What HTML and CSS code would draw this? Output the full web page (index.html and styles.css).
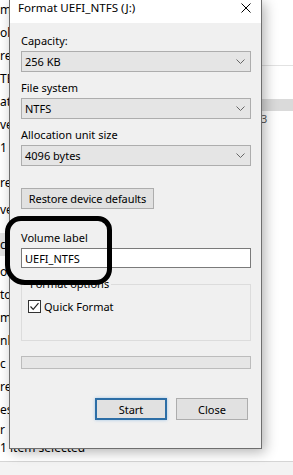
FILE: index.html
```html
<!DOCTYPE html>
<html lang="en">
<head>
  <meta charset="UTF-8">
  <meta name="viewport" content="width=device-width, initial-scale=1.0">
  <title>Format UEFI_NTFS (J:)</title>
  <link rel="stylesheet" href="styles.css">
</head>
<body>
  <!-- Explorer window behind the dialog -->
  <div class="explorer">
    <div class="nav">
      <div class="nav-row">m</div>
      <div class="nav-row">oli</div>
      <div class="nav-row">re</div>
      <div class="nav-row">TEA</div>
      <div class="nav-row">at</div>
      <div class="nav-row">ve</div>
      <div class="nav-row">1</div>
      <div class="nav-row gap">re</div>
      <div class="nav-row gap-s">ve</div>
      <div class="nav-row gap selected">c</div>
      <div class="nav-row gap-s">o</div>
      <div class="nav-row">to</div>
      <div class="nav-row">m</div>
      <div class="nav-row">nlo</div>
      <div class="nav-row">c</div>
      <div class="nav-row">re</div>
      <div class="nav-row">es</div>
      <div class="nav-row last">r</div>
    </div>
    <div class="pane">
      <div class="pane-line"></div>
      <div class="pane-header"></div>
      <div class="pane-count">3</div>
    </div>
  </div>
  <div class="status">1 item selected</div>
  <div class="footer"></div>

  <!-- Format dialog -->
  <div class="dialog">
    <div class="titlebar">
      <span class="title">Format UEFI_NTFS (J:)</span>
      <svg class="close" viewBox="0 0 10 10" width="10" height="10">
        <path d="M0.5 0.5 L9.5 9.5 M9.5 0.5 L0.5 9.5" stroke="#000" stroke-width="1" fill="none"/>
      </svg>
    </div>

    <div class="body">
      <div class="label">Capacity:</div>
      <div class="combo">
        <span class="combo-value">256 KB</span>
        <svg class="combo-arrow" viewBox="0 0 9 5" width="9" height="5"><path d="M0.5 0.5 L4.5 4.5 L8.5 0.5" stroke="#666" fill="none"/></svg>
      </div>

      <div class="label">File system</div>
      <div class="combo">
        <span class="combo-value">NTFS</span>
        <svg class="combo-arrow" viewBox="0 0 9 5" width="9" height="5"><path d="M0.5 0.5 L4.5 4.5 L8.5 0.5" stroke="#666" fill="none"/></svg>
      </div>

      <div class="label">Allocation unit size</div>
      <div class="combo">
        <span class="combo-value">4096 bytes</span>
        <svg class="combo-arrow" viewBox="0 0 9 5" width="9" height="5"><path d="M0.5 0.5 L4.5 4.5 L8.5 0.5" stroke="#666" fill="none"/></svg>
      </div>

      <button class="btn btn-restore" type="button">Restore device defaults</button>

      <div class="label label-volume">Volume label</div>
      <input class="text-input" type="text" value="UEFI_NTFS">

      <fieldset class="group">
        <legend>Format options</legend>
        <div class="check-row">
          <span class="checkbox">
            <svg viewBox="0 0 11 11" width="11" height="11"><path d="M1.5 5.5 L4.2 8.3 L9.5 2.2" stroke="#222" stroke-width="1.2" fill="none"/></svg>
          </span>
          <span>Quick Format</span>
        </div>
      </fieldset>

      <div class="progress"></div>

      <div class="actions">
        <button class="btn btn-default" type="button">Start</button>
        <button class="btn" type="button">Close</button>
      </div>
    </div>
  </div>

  <!-- hand drawn marker around the volume label -->
  <div class="marker"></div>
</body>
</html>
```

FILE: styles.css
```css
* {
  box-sizing: border-box;
}
html, body {
  margin: 0;
  padding: 0;
}
body {
  width: 293px;
  height: 475px;
  overflow: hidden;
  position: relative;
  background: #fff;
  font-family: "Noto Sans", "Open Sans", sans-serif;
  font-size: 11px;
  color: #000;
}

/* explorer behind */
.explorer {
  height: 441px;
  display: grid;
  grid-template-columns: 200px 1fr;
}
.nav {
  margin-top: -2px;
  font-size: 12px;
}
.nav-row {
  height: 23px;
  line-height: 23px;
  white-space: nowrap;
}
.nav-row.gap {
  margin-top: 12px;
}
.nav-row.gap-s {
  margin-top: 4px;
}
.nav-row.selected {
  background: #e2e2e2;
}
.nav-row.last {
  height: 12px;
  line-height: 12px;
  margin-top: 3px;
}
.pane {
  padding-top: 65px;
}
.pane-line {
  border-top: 1px solid #e2e2e2;
}
.pane-header {
  margin-top: 33px;
  height: 12px;
  background: #dadada;
}
.pane-count {
  padding-left: 61px;
  line-height: 16px;
  color: #555;
}
.status {
  height: 20px;
  line-height: 14px;
  font-size: 12px;
}
.footer {
  height: 14px;
  border-top: 1px solid #d5d5d5;
  background: #f3f3f3;
}

/* dialog */
.dialog {
  position: absolute;
  left: 9px;
  top: 0;
  width: 253px;
  height: 449px;
  background: #f0f0f0;
  border: 1px solid #6e6e6e;
  border-top: none;
  box-shadow: 3px 3px 12px rgba(0, 0, 0, 0.3);
  display: flex;
  flex-direction: column;
}
.titlebar {
  height: 23px;
  flex-shrink: 0;
  background: #fff;
  display: flex;
  align-items: flex-start;
  padding: 0 10px 0 8px;
}
.title {
  line-height: 16px;
  font-size: 11.6px;
}
.close {
  margin-left: auto;
  margin-top: 3px;
}
.body {
  flex: 1;
  display: flex;
  flex-direction: column;
  padding: 10px 10px 0 11px;
}
.label {
  line-height: 16px;
  margin-bottom: 2px;
}
.combo {
  height: 21px;
  background: #e5e5e5;
  border: 1px solid #adadad;
  display: flex;
  align-items: center;
  padding: 0 5px 0 3px;
  margin-bottom: 8px;
}
.combo-value {
  flex: 1;
}
.btn {
  font: inherit;
  color: #000;
  height: 22px;
  width: 72px;
  padding: 0;
  background: #e1e1e1;
  border: 1px solid #adadad;
  border-radius: 0;
}
.btn-restore {
  align-self: flex-start;
  width: 133px;
  height: 21px;
  margin-top: 14px;
  letter-spacing: -0.1px;
}
.label-volume {
  margin-top: 21px;
}
.text-input {
  font: inherit;
  color: #000;
  height: 20px;
  background: #fff;
  border: 1px solid #7a7a7a;
  padding: 0 3px;
  margin: 0;
  outline: none;
}
.group {
  margin: 8px 0 0;
  padding: 6px 6px 26px;
  border: 1px solid #dcdcdc;
  min-width: 0;
}
.group legend {
  padding: 0 2px;
  line-height: 16px;
}
.check-row {
  display: flex;
  align-items: center;
  gap: 3px;
  height: 16px;
}
.checkbox {
  width: 13px;
  height: 13px;
  border: 1px solid #333;
  background: #fff;
  display: flex;
}
.progress {
  margin-top: 15px;
  height: 13px;
  background: #e6e6e6;
  border: 1px solid #bcbcbc;
}
.actions {
  margin-top: 29px;
  display: flex;
  justify-content: flex-end;
  gap: 9px;
  padding-right: 3px;
}
.btn-default {
  border: 2px solid #2d6ea6;
  box-shadow: 0 0 3px rgba(110, 170, 225, 0.6);
}

/* marker drawn over the screenshot */
.marker {
  position: absolute;
  left: 5px;
  top: 216px;
  width: 107px;
  height: 69px;
  border: 5px solid #000;
  border-radius: 16px 14px 16px 20px;
}
```
